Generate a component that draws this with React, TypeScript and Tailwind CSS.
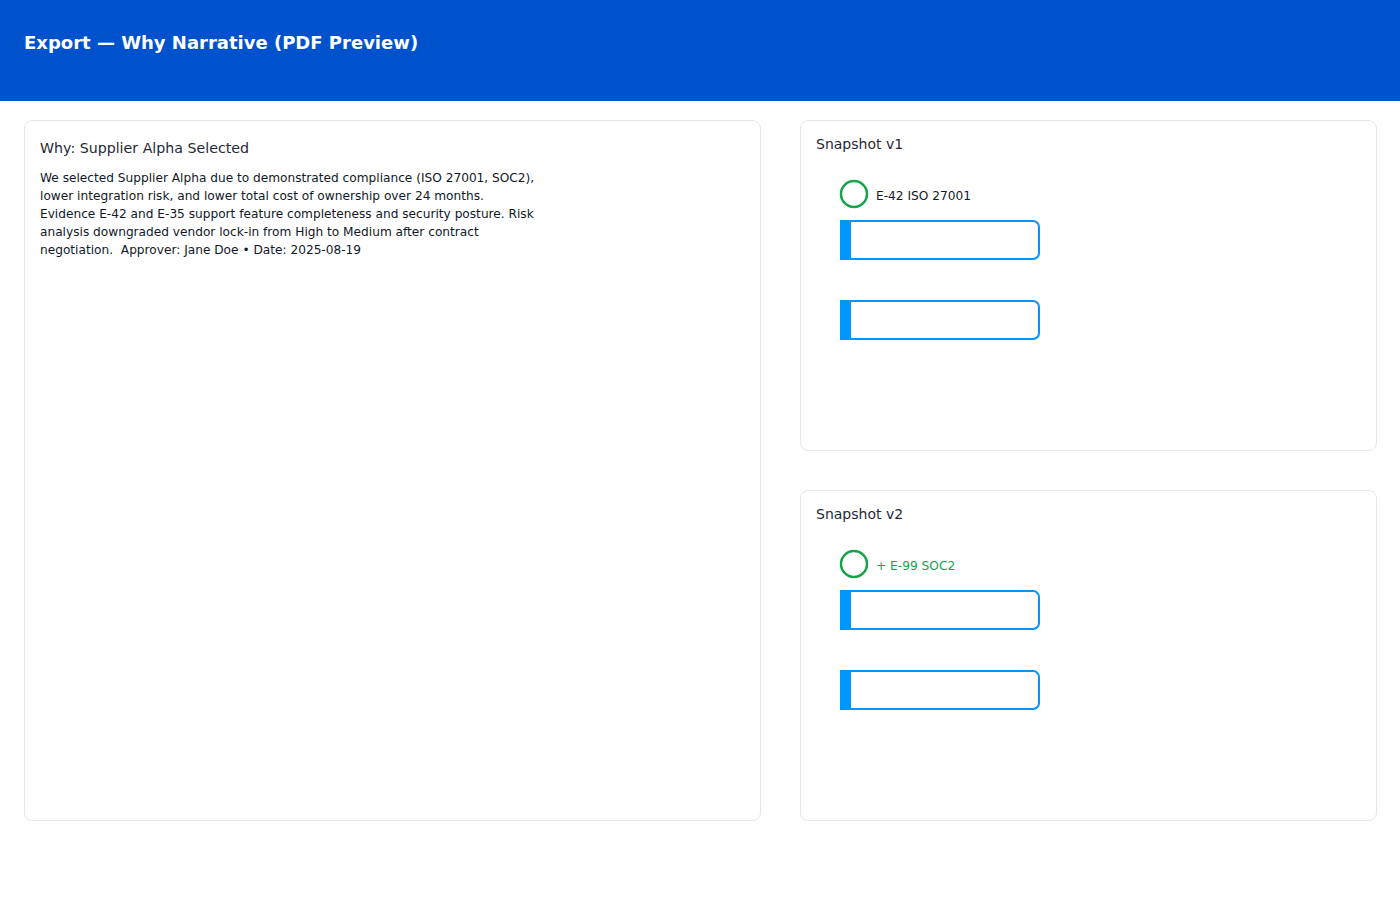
import React from 'react'

function SnapshotCard({ title, label, added }: { title: string; label: string; added?: boolean }) {
  return (
    <div className="h-[331px] rounded-lg border border-[#e5e7eb] bg-white px-[15px] pt-[14px]">
      <h3 className="text-[14px] leading-[18px] text-[#1f2937]">{title}</h3>
      {/* snapshot diagram */}
      <svg width="260" height="200" className="mt-[1px] block">
        <circle cx="38" cy="40" r="13" fill="none" stroke="#16a34a" strokeWidth="2.5" />
        <text
          x="60"
          y="46"
          fontSize="12.2"
          fontFamily="'DejaVu Sans', sans-serif"
          fill={added ? '#16a34a' : '#111827'}
        >
          {label}
        </text>
        <rect x="25" y="67" width="198" height="38" rx="6" fill="#fff" stroke="#0096ff" strokeWidth="2" />
        <rect x="24" y="66" width="11" height="40" fill="#0096ff" />
        <rect x="25" y="147" width="198" height="38" rx="6" fill="#fff" stroke="#0096ff" strokeWidth="2" />
        <rect x="24" y="146" width="11" height="40" fill="#0096ff" />
      </svg>
    </div>
  )
}

export default function App() {
  return (
    <div className="min-h-screen bg-white" style={{ fontFamily: "'DejaVu Sans', sans-serif" }}>
      {/* Header */}
      <header className="h-[101px] bg-[#0052cc] px-6 pt-[31px]">
        <h1 className="text-[18px] font-bold leading-[24px] text-white">
          Export — Why Narrative (PDF Preview)
        </h1>
      </header>

      <main className="grid grid-cols-[737px_577px] gap-[39px] px-6 pt-[19px]">
        {/* Narrative */}
        <section className="h-[701px] rounded-lg border border-[#e5e7eb] bg-white px-[15px] pt-[17px]">
          <h2 className="text-[14.2px] leading-[20px] text-[#1f2937]">Why: Supplier Alpha Selected</h2>
          <p className="mt-[11px] whitespace-nowrap text-[12.17px] leading-[18px] text-[#111827]">
            We selected Supplier Alpha due to demonstrated compliance (ISO 27001, SOC2),
            <br />
            lower integration risk, and lower total cost of ownership over 24 months.
            <br />
            Evidence E-42 and E-35 support feature completeness and security posture. Risk
            <br />
            analysis downgraded vendor lock-in from High to Medium after contract
            <br />
            negotiation.{'\u00a0 '}Approver: Jane Doe • Date: 2025-08-19
          </p>
        </section>

        {/* Snapshots */}
        <div className="flex flex-col gap-[39px]">
          <SnapshotCard title="Snapshot v1" label="E-42 ISO 27001" />
          <SnapshotCard title="Snapshot v2" label="+ E-99 SOC2" added />
        </div>
      </main>
    </div>
  )
}
